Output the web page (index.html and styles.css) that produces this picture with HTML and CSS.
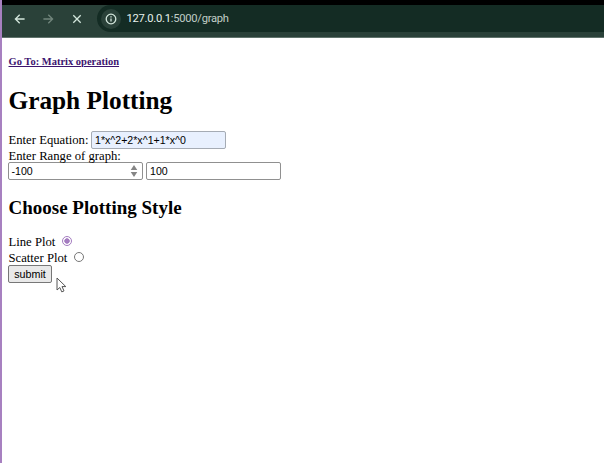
FILE: index.html
```html
<!DOCTYPE html>
<html lang="en">
<head>
<meta charset="utf-8">
<title>Graph Plotting</title>
<link rel="stylesheet" href="styles.css">
</head>
<body>
<div class="window">
  <header class="toolbar">
    <nav class="nav">
      <svg class="icon" viewBox="0 0 12 12"><path d="M10.6 6H1.4M5.7 1.7L1.4 6l4.3 4.3"/></svg>
      <svg class="icon dim" viewBox="0 0 12 12"><path d="M1.4 6h9.2M6.3 1.7L10.6 6l-4.3 4.3"/></svg>
      <svg class="icon" viewBox="0 0 12 12"><path d="M2.3 2.3l7.4 7.4M9.7 2.3L2.3 9.7"/></svg>
    </nav>
    <div class="address">
      <span class="info"><svg class="icon" viewBox="0 0 12 12"><circle cx="6" cy="6" r="4.8"/><path d="M6 5.4v3.2M6 3.2v1.2"/></svg></span>
      <span class="url">127.0.0.1<span class="path">:5000/graph</span></span>
    </div>
  </header>
  <main class="page">
    <a class="link" href="#">Go To: Matrix operation</a>
    <h1>Graph Plotting</h1>
    <form>
      <div class="row equation"><label for="eq">Enter Equation:</label><input id="eq" class="field filled" type="text" value="1*x^2+2*x^1+1*x^0"></div>
      <div class="row caption">Enter Range of graph:</div>
      <div class="row range">
        <div class="field spin"><span>-100</span><svg class="arrows" viewBox="0 0 8 12"><path d="M4 0l3.3 5H.7zM4 12l3.3-5H.7z"/></svg></div>
        <input class="field" type="text" value="100" aria-label="Range end">
      </div>
      <h2>Choose Plotting Style</h2>
      <div class="row option line"><span>Line Plot</span><span class="radio on"></span></div>
      <div class="row option scatter"><span>Scatter Plot</span><span class="radio"></span></div>
      <button type="button">submit</button>
    </form>
  </main>
  <svg class="cursor" viewBox="0 0 11 16"><path d="M1 1v12l2.8-2.5 2 4.4 2.2-1-2-4.3H9.8z"/></svg>
</div>
</body>
</html>
```
FILE: styles.css
```css
* { box-sizing: border-box; }
body { margin: 0; background: #fff; color: #000; font-family: "Liberation Serif", serif; overflow: hidden; }
.window { position: relative; height: 463px; border-left: 2px solid #a780c0; }
.toolbar { height: 38px; border-top: 5px solid #000; border-bottom: 1px solid #60736c; background: #2a4139; display: flex; padding-left: 11.5px; }
.nav { display: flex; gap: 16.5px; height: 27px; align-items: center; width: 83.5px; }
.icon { width: 12px; height: 12px; flex: none; fill: none; stroke: #d3e6dc; stroke-width: 1.3; }
.dim { stroke: #71857c; }
.address { flex: 1; height: 27px; background: #142c24; border-radius: 14px 0 0 14px; display: flex; align-items: center; padding-left: 4px; }
.info { width: 20px; height: 20px; border-radius: 50%; background: #2a4139; display: flex; align-items: center; justify-content: center; }
.url { margin-left: 5.5px; font: 11.2px/16px Roboto, sans-serif; letter-spacing: -0.26px; color: #e8f2ed; }
.path { color: #c0cec7; }
.page { padding: 17px 0 0 6px; }
.link { display: block; width: max-content; font-size: 10.5px; line-height: 14px; margin-left: .5px; font-weight: bold; color: #3d146f; }
h1 { font-size: 25.3px; line-height: 30px; margin: 16px 0 16px; text-indent: .5px; }
h2 { font-size: 19px; line-height: 22px; margin: 17px 0 15px; text-indent: .5px; }
.row { display: flex; font-size: 12.7px; }
.row > label, .option > span:first-child { margin-left: .5px; }
.equation { height: 18px; line-height: 18px; gap: 2.5px; }
.caption { position: relative; z-index: 1; height: 13px; line-height: 14px; padding-left: .5px; }
.range { gap: 3px; }
.field { width: 135px; height: 18px; border: 1px solid #909090; border-radius: 2px; background: #fff; padding: 0 3px; font: 10.6px/16px "Liberation Sans", sans-serif; color: #000; }
.filled { background: #e8f0fe; border-color: #a5abb4; }
.spin { display: flex; align-items: center; justify-content: space-between; padding: 0 4px 0 2.5px; }
.arrows { width: 8px; height: 12px; fill: #858585; }
.option { height: 16px; line-height: 16px; }
.radio { width: 10px; height: 10px; border: 1px solid #777; border-radius: 50%; margin: 2px 0 0 7px; }
.on { border-color: #a47cc0; background: radial-gradient(circle, #a47cc0 0 2.4px, #fff 3px); }
button { display: block; width: 44px; height: 18px; margin-top: -1px; padding: 0; border: 1px solid #777; border-radius: 2px; background: #e9e9e9; font: 10.7px/15px "Liberation Sans", sans-serif; color: #000; }
.cursor { position: absolute; left: 54px; top: 277px; width: 11px; height: 16px; fill: #fff; stroke: #555; stroke-width: 1; }
```
